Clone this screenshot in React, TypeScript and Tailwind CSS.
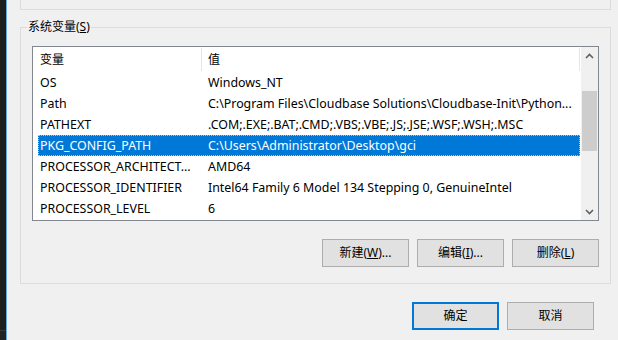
const rows = [
  { name: 'OS', value: 'Windows_NT' },
  { name: 'Path', value: 'C:\\Program Files\\Cloudbase Solutions\\Cloudbase-Init\\Python...' },
  { name: 'PATHEXT', value: '.COM;.EXE;.BAT;.CMD;.VBS;.VBE;.JS;.JSE;.WSF;.WSH;.MSC' },
  { name: 'PKG_CONFIG_PATH', value: 'C:\\Users\\Administrator\\Desktop\\gci', selected: true },
  { name: 'PROCESSOR_ARCHITECT...', value: 'AMD64' },
  { name: 'PROCESSOR_IDENTIFIER', value: 'Intel64 Family 6 Model 134 Stepping 0, GenuineIntel' },
  { name: 'PROCESSOR_LEVEL', value: '6' },
];

const Chevron = ({ down }: { down?: boolean }) => (
  <svg width="9" height="6" viewBox="0 0 9 6" className={down ? 'rotate-180' : ''}>
    <path d="M1 5 L4.5 1.5 L8 5" fill="none" stroke="#606060" strokeWidth={1.6} />
  </svg>
);

const WinButton = ({ children, primary }: { children: React.ReactNode; primary?: boolean }) => (
  <button
    className={`w-[87px] h-[28px] bg-[#e1e1e1] flex items-center justify-center text-[12px] text-black ${
      primary ? 'border-2 border-[#0078d7]' : 'border border-[#adadad]'
    }`}
  >
    {children}
  </button>
);

export default function App() {
  return (
    <div
      className="w-[618px] h-[340px] flex overflow-hidden bg-[#f0f0f0] text-[12.4px] leading-[16px] text-black"
      style={{ fontFamily: '"Noto Sans", "Noto Sans CJK SC", sans-serif' }}
    >
      {/* dark window edge */}
      <div className="w-[6px] flex flex-col bg-[#1e1e1e]">
        <div className="h-[330px]" />
        <div className="h-px bg-[#3a3a3a]" />
        <div className="flex-1 bg-[#232323]" />
      </div>
      <div className="w-px bg-[#63a7e4]" />

      <div className="flex-1 flex flex-col">
        {/* user variables group (cut off) */}
        <div className="ml-[13px] w-[591px] h-[10px] border-x border-b border-[#dcdcdc]" />

        {/* system variables group */}
        <div className="mt-[17px] ml-[13px] w-[591px] border border-[#dcdcdc] relative pt-[18px] px-[11px] pb-[16px]">
          <span className="absolute left-[6px] top-[-9px] px-[1px] bg-[#f0f0f0] text-[12px]">
            系统变量(<span className="underline">S</span>)
          </span>

          <div className="w-[567px] h-[175px] border border-[#828790] bg-white flex">
            <div className="flex-1 flex flex-col">
              {/* header */}
              <div className="h-[25px] flex py-[1px] text-[12px]">
                <div className="w-[169px] pl-[7px] border-r border-[#e5e5e5] flex items-center">变量</div>
                <div className="w-[378px] pl-[6px] border-r border-[#e5e5e5] flex items-center">值</div>
              </div>
              {rows.map((r) => (
                <div key={r.name} className="h-[21px] pl-[5px] flex">
                  <div
                    className={`w-[542px] h-full flex items-center whitespace-nowrap ${
                      r.selected ? 'bg-[#0078d7] text-white outline outline-1 outline-dotted outline-[#9cc8ef] -outline-offset-1' : ''
                    }`}
                  >
                    <div className="w-[170px] pl-[2px]">{r.name}</div>
                    <div className="flex-1">{r.value}</div>
                  </div>
                </div>
              ))}
            </div>

            {/* scrollbar */}
            <div className="w-[17px] bg-[#f0f0f0] flex flex-col">
              <div className="h-[17px] flex items-center justify-center">
                <Chevron />
              </div>
              <div className="flex-1">
                <div className="mt-[27px] mx-auto w-[15px] h-[60px] bg-[#cdcdcd]" />
              </div>
              <div className="h-[17px] flex items-center justify-center">
                <Chevron down />
              </div>
            </div>
          </div>

          <div className="mt-[18px] flex justify-end gap-[8px]">
            <WinButton>
              新建(<span className="underline">W</span>)...
            </WinButton>
            <WinButton>
              编辑(<span className="underline">I</span>)...
            </WinButton>
            <WinButton>
              删除(<span className="underline">L</span>)
            </WinButton>
          </div>
        </div>

        {/* dialog buttons */}
        <div className="mt-[18px] pl-[405px] flex gap-[8px]">
          <WinButton primary>确定</WinButton>
          <WinButton>取消</WinButton>
        </div>
      </div>
    </div>
  );
}
